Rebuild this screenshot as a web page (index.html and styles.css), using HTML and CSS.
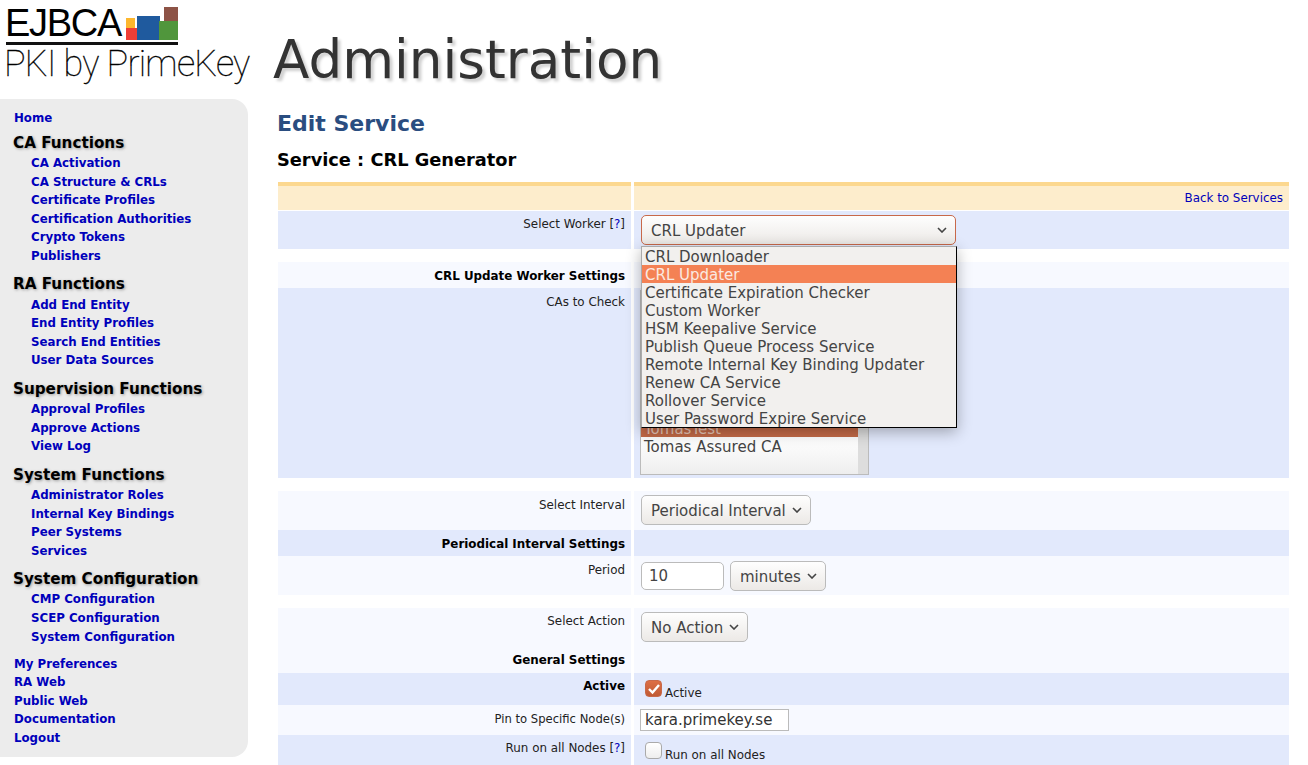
FILE: index.html
```html
<!DOCTYPE html>
<html lang="en">
<head>
    <meta charset="UTF-8">
    <meta name="viewport" content="width=device-width, initial-scale=1.0">
    <title>EJBCA Administration</title>
    <link rel="stylesheet" href="styles.css">
</head>
<body>
    <header class="banner">
        <div class="logo">
            <div class="logo-top">
                <span class="logo-name">EJBCA</span>
                <svg class="logo-blocks" width="56" height="33" viewBox="0 0 56 33">
                    <rect x="4" y="11" width="9" height="11" fill="#fdb72e"/>
                    <rect x="4" y="21" width="12" height="12" fill="#ef3e36"/>
                    <rect x="15" y="9" width="23" height="24" fill="#1f5a9e"/>
                    <rect x="37" y="14" width="19" height="19" fill="#50963c"/>
                    <rect x="42" y="0" width="14" height="14" fill="#8d5346"/>
                </svg>
            </div>
            <div class="logo-rule"></div>
            <div class="logo-sub">PKI by PrimeKey</div>
        </div>
        <div class="banner-title">Administration</div>
    </header>

    <div class="page">
        <nav class="sidebar">
            <a class="nav-top" href="#">Home</a>

            <h3 class="first-group">CA Functions</h3>
            <a href="#">CA Activation</a>
            <a href="#">CA Structure &amp; CRLs</a>
            <a href="#">Certificate Profiles</a>
            <a href="#">Certification Authorities</a>
            <a href="#">Crypto Tokens</a>
            <a href="#">Publishers</a>

            <h3>RA Functions</h3>
            <a href="#">Add End Entity</a>
            <a href="#">End Entity Profiles</a>
            <a href="#">Search End Entities</a>
            <a href="#">User Data Sources</a>

            <h3>Supervision Functions</h3>
            <a href="#">Approval Profiles</a>
            <a href="#">Approve Actions</a>
            <a href="#">View Log</a>

            <h3>System Functions</h3>
            <a href="#">Administrator Roles</a>
            <a href="#">Internal Key Bindings</a>
            <a href="#">Peer Systems</a>
            <a href="#">Services</a>

            <h3>System Configuration</h3>
            <a href="#">CMP Configuration</a>
            <a href="#">SCEP Configuration</a>
            <a href="#">System Configuration</a>

            <div class="nav-bottom">
                <a class="nav-top" href="#">My Preferences</a>
                <a class="nav-top" href="#">RA Web</a>
                <a class="nav-top" href="#">Public Web</a>
                <a class="nav-top" href="#">Documentation</a>
                <a class="nav-top" href="#">Logout</a>
            </div>
        </nav>

        <main class="content">
            <h1>Edit Service</h1>
            <h2>Service : CRL Generator</h2>

            <div class="form-table">
                <div class="row row-head">
                    <div class="cell"></div>
                    <div class="cell cell-back"><a href="#">Back to Services</a></div>
                </div>

                <div class="row row-blue row-worker">
                    <div class="cell cell-label">Select Worker <span class="help">[<a href="#">?</a>]</span></div>
                    <div class="cell cell-field worker-field">
                        <button class="select select-focus" type="button">
                            <span>CRL Updater</span>
                            <svg class="chevron" width="10" height="6" viewBox="0 0 10 6"><path d="M1 1l4 4 4-4" fill="none" stroke="#444" stroke-width="1.6"/></svg>
                        </button>
                        <ul class="dropdown">
                            <li>CRL Downloader</li>
                            <li class="picked">CRL Updater</li>
                            <li>Certificate Expiration Checker</li>
                            <li>Custom Worker</li>
                            <li>HSM Keepalive Service</li>
                            <li>Publish Queue Process Service</li>
                            <li>Remote Internal Key Binding Updater</li>
                            <li>Renew CA Service</li>
                            <li>Rollover Service</li>
                            <li>User Password Expire Service</li>
                        </ul>
                    </div>
                </div>

                <div class="row-gap"></div>

                <div class="row row-light row-section">
                    <div class="cell cell-label cell-bold">CRL Update Worker Settings</div>
                    <div class="cell"></div>
                </div>

                <div class="row row-blue row-cas">
                    <div class="cell cell-label">CAs to Check</div>
                    <div class="cell cell-field">
                        <div class="listbox">
                            <div class="listbox-items">
                                <div class="listbox-item listbox-picked">TomasTest</div>
                                <div class="listbox-item">Tomas Assured CA</div>
                            </div>
                            <div class="listbox-track"></div>
                        </div>
                    </div>
                </div>

                <div class="row-gap"></div>

                <div class="row row-light row-control">
                    <div class="cell cell-label">Select Interval</div>
                    <div class="cell cell-field">
                        <button class="select" type="button">
                            <span>Periodical Interval</span>
                            <svg class="chevron" width="10" height="6" viewBox="0 0 10 6"><path d="M1 1l4 4 4-4" fill="none" stroke="#444" stroke-width="1.6"/></svg>
                        </button>
                    </div>
                </div>

                <div class="row row-blue row-section">
                    <div class="cell cell-label cell-bold">Periodical Interval Settings</div>
                    <div class="cell"></div>
                </div>

                <div class="row row-light row-control">
                    <div class="cell cell-label">Period</div>
                    <div class="cell cell-field period-field">
                        <input class="period-input" type="text" value="10">
                        <button class="select" type="button">
                            <span>minutes</span>
                            <svg class="chevron" width="10" height="6" viewBox="0 0 10 6"><path d="M1 1l4 4 4-4" fill="none" stroke="#444" stroke-width="1.6"/></svg>
                        </button>
                    </div>
                </div>

                <div class="row-gap"></div>

                <div class="row row-light row-action">
                    <div class="cell cell-label">Select Action</div>
                    <div class="cell cell-field">
                        <button class="select" type="button">
                            <span>No Action</span>
                            <svg class="chevron" width="10" height="6" viewBox="0 0 10 6"><path d="M1 1l4 4 4-4" fill="none" stroke="#444" stroke-width="1.6"/></svg>
                        </button>
                    </div>
                </div>

                <div class="row row-light row-general">
                    <div class="cell cell-label cell-bold">General Settings</div>
                    <div class="cell"></div>
                </div>

                <div class="row row-blue row-active">
                    <div class="cell cell-label cell-bold">Active</div>
                    <div class="cell cell-field check-field">
                        <span class="checkbox checkbox-on">
                            <svg width="14" height="12" viewBox="0 0 14 12"><path d="M2 6l3.500 3.500L12 2" fill="none" stroke="#fff" stroke-width="2.400"/></svg>
                        </span>
                        <span class="check-text">Active</span>
                    </div>
                </div>

                <div class="row row-light row-pin">
                    <div class="cell cell-label">Pin to Specific Node(s)</div>
                    <div class="cell cell-field">
                        <input class="node-input" type="text" value="kara.primekey.se">
                    </div>
                </div>

                <div class="row row-blue row-check">
                    <div class="cell cell-label">Run on all Nodes <span class="help">[<a href="#">?</a>]</span></div>
                    <div class="cell cell-field check-field">
                        <span class="checkbox"></span>
                        <span class="check-text">Run on all Nodes</span>
                    </div>
                </div>
            </div>
        </main>
    </div>
</body>
</html>
```

FILE: styles.css
```css
html, body {
    height: 765px;
    overflow: hidden;
}

body {
    margin: 0;
    background-color: #fff;
    font-family: "DejaVu Sans", sans-serif;
    font-size: 11.900px;
    color: #222;
}

a {
    color: #0000bb;
    text-decoration: none;
}

/* banner */
.banner {
    display: flex;
    height: 99px;
    padding-left: 6px;
}

.logo {
    width: 267px;
    padding-top: 7px;
    color: #000;
    font-family: Roboto, sans-serif;
}

.logo-top {
    display: flex;
    width: 172px;
    height: 33px;
    align-items: flex-end;
    justify-content: space-between;
}

.logo-name {
    height: 33px;
    margin-left: -1px;
    font-family: "Liberation Sans", sans-serif;
    font-size: 38px;
    line-height: 32px;
    letter-spacing: -1.300px;
}

.logo-rule {
    width: 172px;
    height: 3px;
    margin-top: 2px;
    background-color: #111;
}

.logo-sub {
    margin-left: -2px;
    font-size: 36px;
    font-weight: 100;
    line-height: 38px;
    letter-spacing: -0.750px;
    white-space: nowrap;
    -webkit-text-stroke: 0.3px #000;
}

.banner-title {
    padding-top: 25px;
    font-size: 53.200px;
    line-height: 70px;
    color: #333;
    text-shadow: 3px 3px 3px #d0d0d0;
}

/* layout */
.page {
    display: flex;
    align-items: flex-start;
}

.sidebar {
    display: flex;
    flex-direction: column;
    box-sizing: border-box;
    width: 248px;
    height: 658px;
    padding: 10px 0 0 14px;
    flex-shrink: 0;
    background-color: #ececec;
    border-radius: 0 16px 16px 0;
}

.sidebar a {
    height: 18.600px;
    padding-left: 17px;
    font-size: 11.800px;
    font-weight: bold;
    line-height: 18.600px;
    white-space: nowrap;
}

.sidebar a.nav-top {
    padding-left: 0;
}

.sidebar h3 {
    margin: 8.700px 0 1.400px -1px;
    font-size: 15.200px;
    line-height: 20px;
    color: #000;
    text-shadow: 1px 1px 3px #999;
}

.sidebar h3.first-group {
    margin-top: 5px;
}

.nav-bottom {
    display: flex;
    flex-direction: column;
    margin-top: 8.400px;
}

.content {
    width: 1011px;
    margin-left: 30px;
}

h1 {
    margin: 0 0 0 -1px;
    padding-top: 9px;
    font-size: 22px;
    line-height: 32px;
    color: #2a4d80;
}

h2 {
    margin: 8px 0 0 -1px;
    font-size: 17.800px;
    line-height: 24px;
    color: #000;
}

/* form table */
.form-table {
    margin-top: 10px;
}

.row {
    display: grid;
    grid-template-columns: 353px 655px;
    column-gap: 3px;
}

.cell-label {
    padding: 6px 6px 0 0;
    text-align: right;
    line-height: 16px;
}

.cell-bold {
    font-weight: bold;
    color: #000;
}

.cell-field {
    padding: 4px 0 0 7px;
}

.row-head {
    height: 28px;
}

.row-head .cell {
    border-top: 4px solid #fcd88f;
    background-color: #fdedcc;
}

.row-head .cell-back {
    padding: 4px 6px 0 0;
    text-align: right;
    line-height: 16px;
}

.row-blue .cell {
    background-color: #e2e9fc;
}

.row-light .cell {
    background-color: #f7f9ff;
}

.row-worker {
    height: 38px;
    margin-top: 1px;
}

.row-worker .cell-label,
.row-action .cell-label,
.row-active .cell-label,
.row-check .cell-label {
    padding-top: 5px;
}

.row-gap {
    height: 13px;
}

.row-section {
    height: 26px;
}

.row-cas {
    height: 190px;
}

.row-control {
    height: 39px;
}

.row-action {
    height: 38px;
}

.row-general {
    height: 27px;
}

.row-active {
    height: 32px;
}

.row-check,
.row-pin {
    height: 30px;
}

.row-pin .cell-label {
    font-size: 11.600px;
}

/* drawn form controls */
.select {
    display: inline-flex;
    box-sizing: border-box;
    height: 30px;
    padding: 0 8px 0 9px;
    align-items: center;
    gap: 6px;
    background: linear-gradient(#fefefe, #ece9e6);
    border: 1px solid #bbb;
    border-radius: 5px;
    font-family: "DejaVu Sans", sans-serif;
    font-size: 15px;
    color: #444;
}

.select span {
    padding-top: 2px;
}

.select-focus {
    display: flex;
    width: 315px;
    justify-content: space-between;
    border-color: #c8694a;
}

.worker-field {
    position: relative;
}

.dropdown {
    position: absolute;
    left: 7px;
    top: 35px;
    z-index: 2;
    box-sizing: border-box;
    width: 316px;
    margin: 0;
    padding: 0;
    list-style: none;
    background-color: #f2f0ee;
    border: 1px solid #000;
    border-color: #aaa #000 #000 #aaa;
    box-shadow: 0 4px 14px rgba(0, 0, 0, 0.3);
    font-size: 15px;
    color: #444;
}

.dropdown li {
    height: 18px;
    padding-left: 3px;
    line-height: 20px;
    white-space: nowrap;
}

.dropdown .picked {
    background-color: #f48154;
    color: #fbe9e0;
}

.listbox {
    display: flex;
    box-sizing: border-box;
    width: 229px;
    height: 185px;
    margin: -2px 0 0 -1px;
    background: linear-gradient(#fff 80%, #eeeeee);
    border: 1px solid #bbb;
}

.listbox-items {
    display: flex;
    flex-direction: column;
    justify-content: flex-end;
    flex: 1;
    padding-bottom: 19px;
}

.listbox-item {
    height: 18px;
    padding-left: 3px;
    font-size: 15px;
    line-height: 20px;
    color: #444;
}

.listbox-picked {
    background-color: #c46a47;
    color: #e8c7b8;
}

.listbox-track {
    width: 10px;
    background-color: #ddd;
}

.period-field {
    display: flex;
    gap: 6px;
    padding-top: 5px;
}

.period-input {
    box-sizing: border-box;
    width: 83px;
    height: 28px;
    padding: 0 7px;
    margin-top: 1px;
    background-color: #fff;
    border: 1px solid #bbb;
    border-radius: 5px;
    font-family: "DejaVu Sans", sans-serif;
    font-size: 15px;
    color: #444;
}

.node-input {
    box-sizing: border-box;
    width: 149px;
    height: 22px;
    margin-left: -1px;
    padding: 0 4px;
    background-color: #fff;
    border: 1px solid #bbb;
    border-radius: 0;
    font-family: "DejaVu Sans", sans-serif;
    font-size: 15px;
    color: #333;
}

.check-field {
    display: flex;
    align-items: flex-start;
    padding: 7px 0 0 11px;
}

.checkbox {
    display: flex;
    box-sizing: border-box;
    width: 17px;
    height: 17px;
    align-items: center;
    justify-content: center;
    background: linear-gradient(#fff, #eee);
    border: 1px solid #aaa;
    border-radius: 4px;
}

.checkbox-on {
    background: linear-gradient(#dd6f45, #c05a34);
    border-color: #c8694a;
}

.check-text {
    margin: 5px 0 0 3px;
    line-height: 16px;
}
```
